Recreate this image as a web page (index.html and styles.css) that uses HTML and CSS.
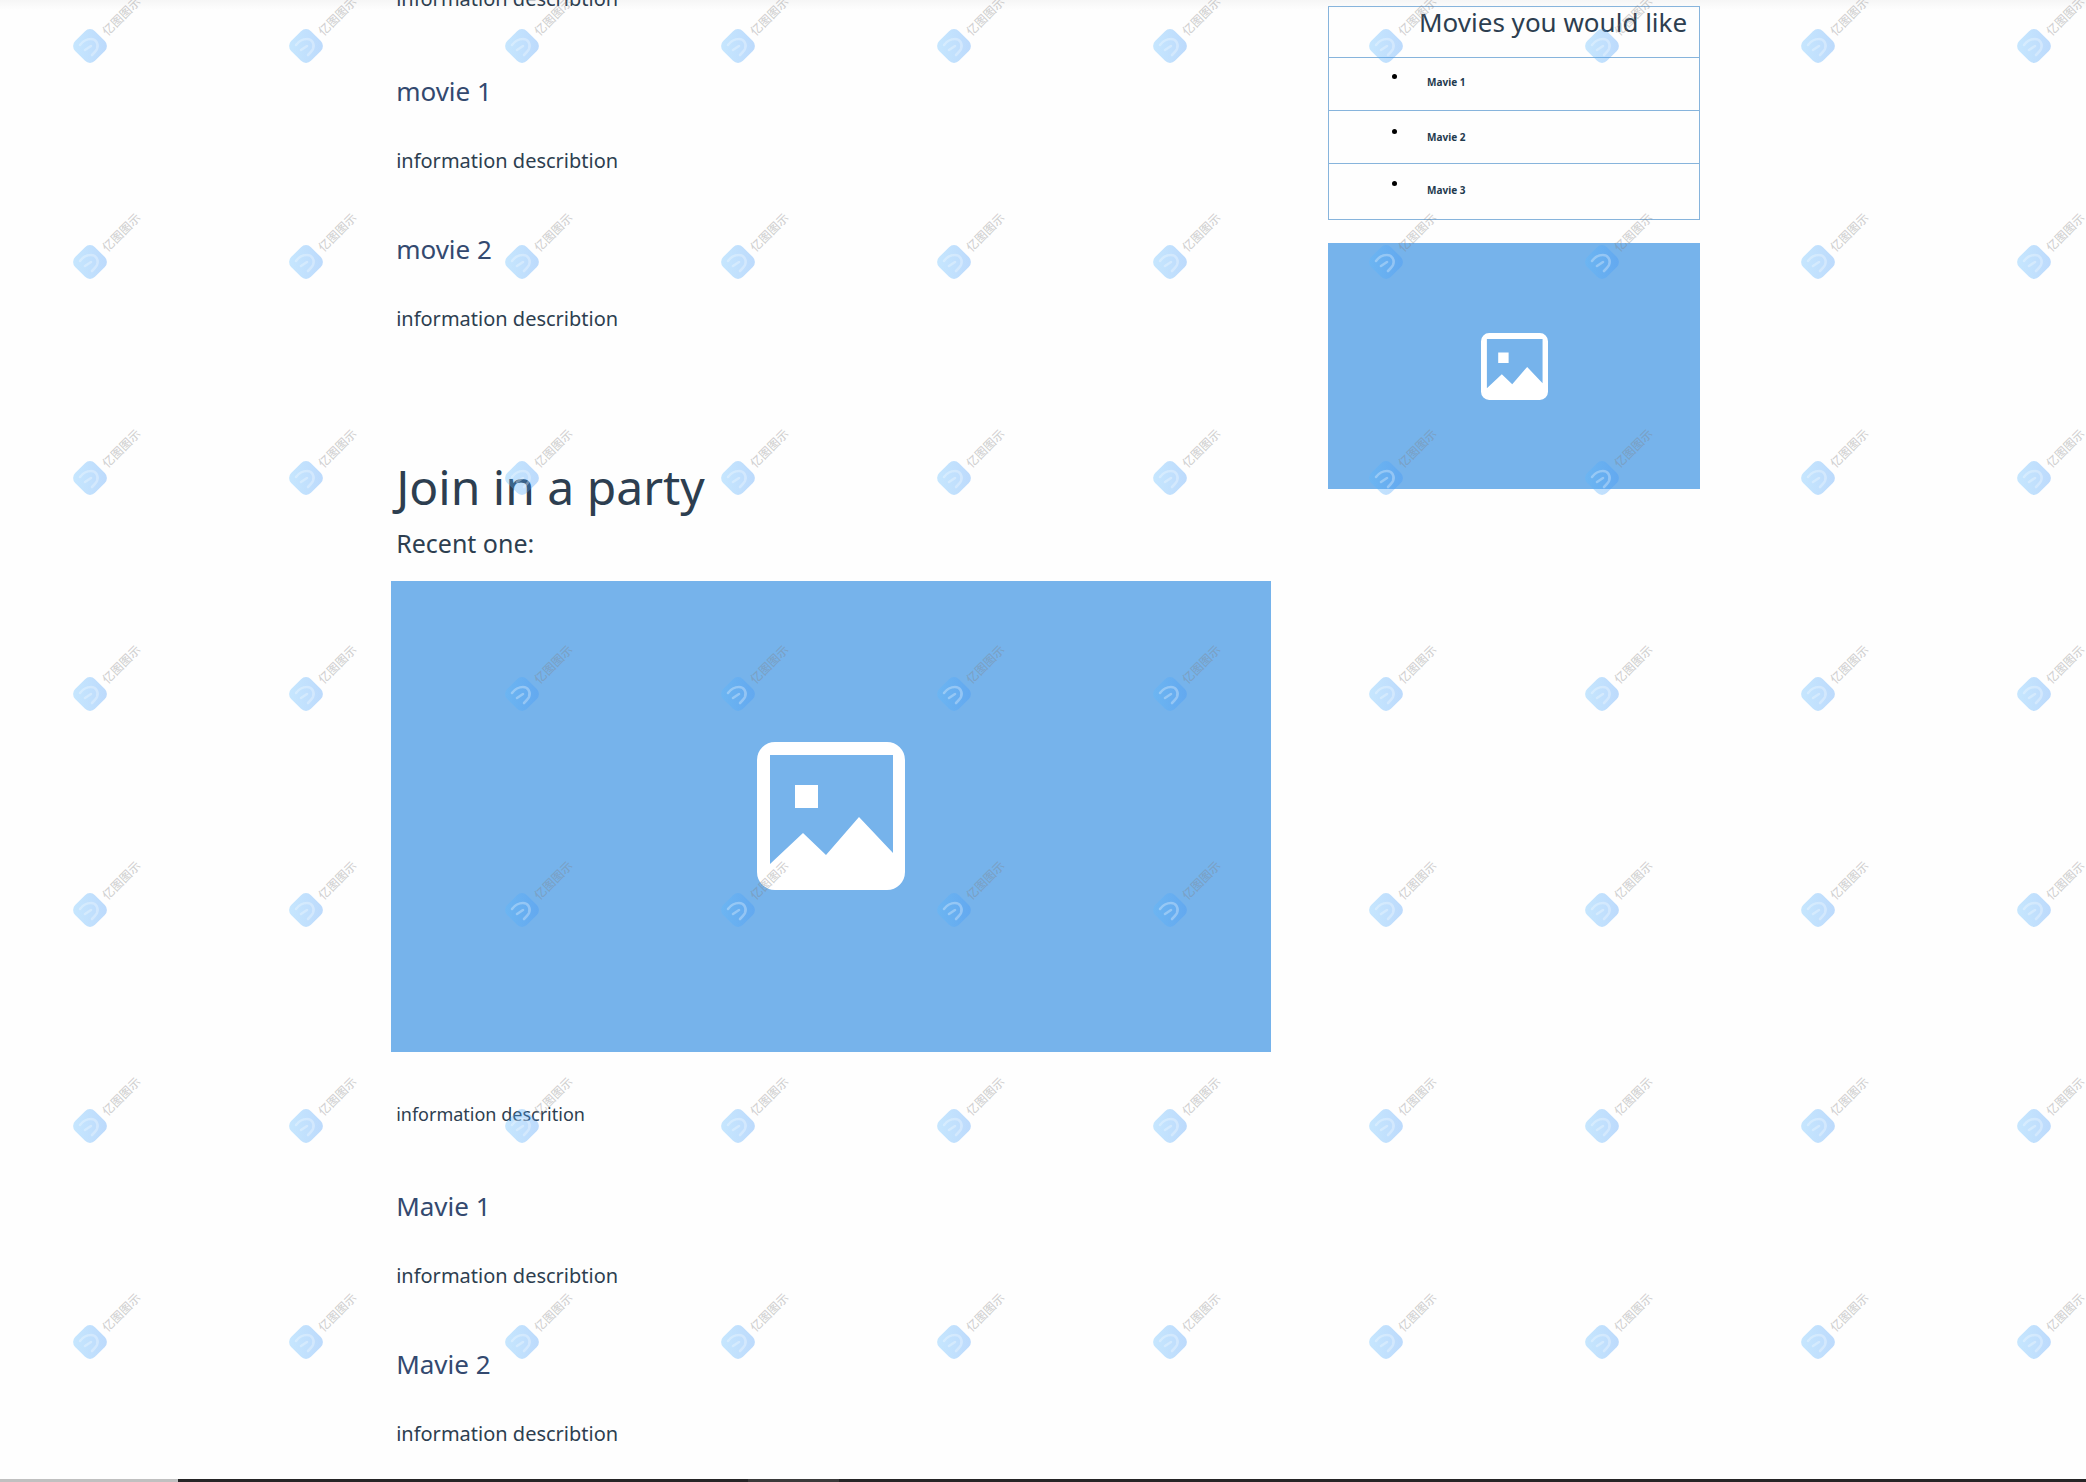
FILE: index.html
```html
<!DOCTYPE html>
<html lang="en">
<head>
<meta charset="utf-8">
<title>Movies</title>
<link rel="stylesheet" href="styles.css">
</head>
<body>
<svg class="defs" aria-hidden="true">
  <defs>
    <linearGradient id="mark-fill" x1="0" y1="1" x2="1" y2="0">
      <stop offset="0" stop-color="#5cbcff"/>
      <stop offset="1" stop-color="#3c92f8"/>
    </linearGradient>
    <symbol id="picture" viewBox="0 0 148 148">
      <path fill="#fff" fill-rule="evenodd" d="M18 0H130A18 18 0 0 1 148 18V130A18 18 0 0 1 130 148H18A18 18 0 0 1 0 130V18A18 18 0 0 1 18 0ZM13 13V122L46 91L69 113L102 75L136 111V13ZM38 43H61V66H38Z"/>
    </symbol>
    <symbol id="mark" viewBox="-20 -20 40 40">
      <rect x="-14" y="-14" width="28" height="28" rx="7" transform="rotate(45)" fill="url(#mark-fill)" fill-opacity=".34"/>
      <path d="M-10 -1C-7 -5 -3 -7 1 -7C6 -7 9 -2 7 3C6 5 4 7 2 9M-5 4L1 0" fill="none" stroke="#fff" stroke-opacity=".3" stroke-width="2.6" stroke-linecap="round"/>
    </symbol>
  </defs>
</svg>
<div class="page">
  <main class="content">
    <p class="info">information describtion</p>
    <section class="movie">
      <h2 class="movie-title">movie 1</h2>
      <p class="info">information describtion</p>
    </section>
    <section class="movie">
      <h2 class="movie-title">movie 2</h2>
      <p class="info">information describtion</p>
    </section>
    <section class="party">
      <h1 class="party-title">Join in a party</h1>
      <p class="recent">Recent one:</p>
      <div class="picture picture-large"><svg class="picture-icon"><use href="#picture"/></svg></div>
      <p class="info info-small">information descrition</p>
    </section>
    <section class="movie">
      <h2 class="movie-title">Mavie 1</h2>
      <p class="info">information describtion</p>
    </section>
    <section class="movie">
      <h2 class="movie-title">Mavie 2</h2>
      <p class="info">information describtion</p>
    </section>
  </main>
  <aside class="sidebar">
    <section class="suggestions">
      <h2 class="suggestions-title">Movies you would like</h2>
      <ul class="suggestions-list">
        <li class="suggestion">Mavie 1</li>
        <li class="suggestion">Mavie 2</li>
        <li class="suggestion">Mavie 3</li>
      </ul>
    </section>
    <div class="picture picture-small"><svg class="picture-icon"><use href="#picture"/></svg></div>
  </aside>
  <div class="watermark" aria-hidden="true"></div>
</div>
<div class="bottom-bar"></div>
<script src="watermark.js"></script>
</body>
</html>
```
FILE: styles.css
```css
* {
  box-sizing: border-box;
}

body {
  margin: 0;
  min-height: 100vh;
  display: flex;
  flex-direction: column;
  background: #fefefe;
  color: #2d3e50;
  font-family: "Noto Sans", "Noto Sans CJK SC", sans-serif;
}

h1, h2, p, ul {
  margin: 0;
  padding: 0;
  font-weight: 400;
}

.defs {
  position: absolute;
  width: 0;
  height: 0;
}

.page {
  position: relative;
  flex: 1;
  display: grid;
  grid-template-columns: 880fr 372fr;
  column-gap: 57px;
  align-items: start;
  padding: 0 18.5% 0 18.75%;
  overflow: hidden;
  background: linear-gradient(#f6f6f6, #fefefe 10px);
}

.content {
  margin-top: -16px;
  padding-bottom: 24px;
}

.info,
.movie-title,
.party-title,
.recent {
  padding-left: 5px;
}

.info {
  font-size: 20px;
  line-height: 30px;
}

.info-small {
  margin-top: 47px;
  font-size: 18px;
}

.movie {
  margin-top: 57px;
}

.movie + .movie {
  margin-top: 53px;
}

.movie-title {
  margin-bottom: 35px;
  color: #33496f;
  font-size: 26px;
  line-height: 40px;
}

.party {
  margin-top: 121px;
}

.party-title {
  font-size: 48px;
  line-height: 64px;
}

.recent {
  margin: 4px 0 18px;
  font-size: 25px;
  line-height: 40px;
}

.picture {
  display: flex;
  align-items: center;
  justify-content: center;
  background: #76b3eb;
}

.picture-large {
  aspect-ratio: 880 / 471;
}

.picture-small {
  margin-top: 23px;
  aspect-ratio: 372 / 246;
}

.picture-large .picture-icon {
  width: 148px;
  height: 148px;
}

.picture-small .picture-icon {
  width: 67px;
  height: 67px;
}

.sidebar {
  padding-top: 6px;
}

.suggestions {
  border: 1px solid #87b4dc;
}

.suggestions-title {
  height: 50px;
  padding-right: 12px;
  font-size: 26px;
  line-height: 30px;
  text-align: right;
}

.suggestions-list {
  list-style: none;
}

.suggestion {
  display: flex;
  align-items: center;
  gap: 30px;
  height: 53px;
  padding-left: 63px;
  border-top: 1px solid #87b4dc;
  color: #1f3a4d;
  font-size: 10px;
  font-weight: 700;
  line-height: 16px;
}

.suggestion:first-child {
  padding-bottom: 4px;
}

.suggestion:last-child {
  height: 56px;
  padding-bottom: 4px;
}

.suggestion::before {
  content: "";
  width: 5px;
  height: 5px;
  margin-bottom: 12px;
  border-radius: 50%;
  background: #000;
}

.watermark {
  position: absolute;
  inset: 0;
  overflow: hidden;
  pointer-events: none;
  display: grid;
  grid-template-columns: repeat(auto-fill, 216px);
  grid-auto-rows: 216px;
}

.mark {
  position: relative;
}

.mark-logo {
  position: absolute;
  left: 70px;
  top: 26px;
  width: 40px;
  height: 40px;
}

.mark-text {
  position: absolute;
  left: 91px;
  top: 8px;
  width: 60px;
  color: rgba(130, 130, 130, .36);
  font-family: "Noto Sans CJK SC", sans-serif;
  font-size: 12px;
  font-weight: 500;
  line-height: 16px;
  text-align: center;
  white-space: nowrap;
  transform: rotate(-45deg);
}

.bottom-bar {
  height: 3px;
  background: linear-gradient(90deg, #c0c0c0 178px, #262526 178px 748px, #3b3a3a 748px 839px, #262526 839px);
}
```
FILE: watermark.js
```js
// Tiles the watermark over the whole page, one mark per 216px cell.
const STEP = 216;
const layer = document.querySelector(".watermark");
const columns = Math.ceil(layer.clientWidth / STEP);
const rows = Math.ceil(layer.clientHeight / STEP);
layer.style.gridTemplateColumns = `repeat(${columns}, ${STEP}px)`;
layer.innerHTML = `
  <div class="mark">
    <svg class="mark-logo"><use href="#mark"/></svg>
    <span class="mark-text">亿图图示</span>
  </div>`.repeat(columns * rows);
```
